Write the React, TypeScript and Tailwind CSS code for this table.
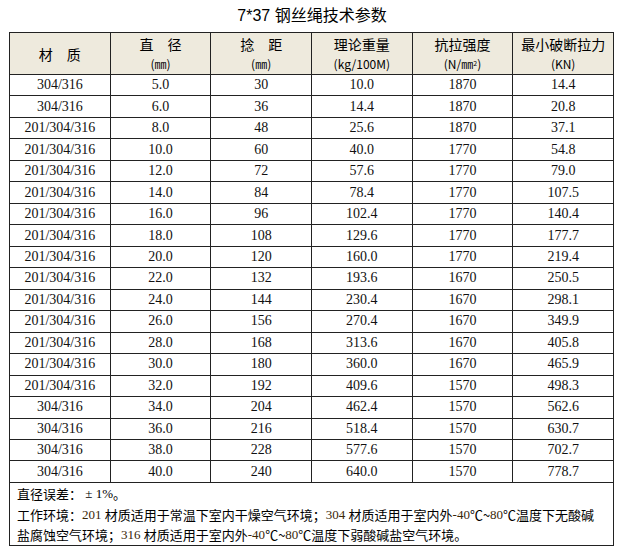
const rows: [string, string, string, string, string, string][] = [
  ['304/316', '5.0', '30', '10.0', '1870', '14.4'],
  ['304/316', '6.0', '36', '14.4', '1870', '20.8'],
  ['201/304/316', '8.0', '48', '25.6', '1870', '37.1'],
  ['201/304/316', '10.0', '60', '40.0', '1770', '54.8'],
  ['201/304/316', '12.0', '72', '57.6', '1770', '79.0'],
  ['201/304/316', '14.0', '84', '78.4', '1770', '107.5'],
  ['201/304/316', '16.0', '96', '102.4', '1770', '140.4'],
  ['201/304/316', '18.0', '108', '129.6', '1770', '177.7'],
  ['201/304/316', '20.0', '120', '160.0', '1770', '219.4'],
  ['201/304/316', '22.0', '132', '193.6', '1670', '250.5'],
  ['201/304/316', '24.0', '144', '230.4', '1670', '298.1'],
  ['201/304/316', '26.0', '156', '270.4', '1670', '349.9'],
  ['201/304/316', '28.0', '168', '313.6', '1670', '405.8'],
  ['201/304/316', '30.0', '180', '360.0', '1670', '465.9'],
  ['201/304/316', '32.0', '192', '409.6', '1570', '498.3'],
  ['304/316', '34.0', '204', '462.4', '1570', '562.6'],
  ['304/316', '36.0', '216', '518.4', '1570', '630.7'],
  ['304/316', '38.0', '228', '577.6', '1570', '702.7'],
  ['304/316', '40.0', '240', '640.0', '1570', '778.7'],
];

function Num({ children }: { children: React.ReactNode }) {
  return <span className="font-['Liberation_Serif',serif] text-[#3a2608]">{children}</span>;
}

function HeadCell({ top, sub }: { top: string; sub?: React.ReactNode }) {
  return (
    <div className="flex h-[42px] flex-col items-center justify-center overflow-hidden border-r border-b border-[#222] bg-[#eeeadd] font-['Noto_Sans_CJK_SC',sans-serif] text-black">
      <div className="h-[20px] text-[14px] leading-[20px]">{top}</div>
      {sub && <div className="h-[19px] text-[12px] leading-[19px]">{sub}</div>}
    </div>
  );
}

export default function App() {
  return (
    <div className="h-[556px] w-[624px] bg-white pt-[5px]">
      <h1 className="h-[22px] text-center font-['Liberation_Sans','Noto_Sans_CJK_SC',sans-serif] text-[16px] leading-[22px] text-black">
        7*37 钢丝绳技术参数
      </h1>
      <div className="ml-[9px] mt-[5px] w-[605px] border-t border-l border-[#222]">
        <div className="grid grid-cols-6">
          <HeadCell top="材　质" />
          <HeadCell top="直　径" sub="(㎜)" />
          <HeadCell top="捻　距" sub="(㎜)" />
          <HeadCell top="理论重量" sub="(kg/100M)" />
          <HeadCell top="抗拉强度" sub={<>(N/㎜<sup className="text-[7px]">2</sup>)</>} />
          <HeadCell top="最小破断拉力" sub="(KN)" />
          {rows.map((r, i) =>
            r.map((c, j) => (
              <div
                key={`${i}-${j}`}
                className="flex h-[21.47px] items-center justify-center border-r border-b border-[#222] font-['Liberation_Serif',serif] text-[14px] leading-[20px] text-[#111]"
              >
                {c}
              </div>
            ))
          )}
        </div>
        <div className="h-[63px] border-r border-b border-[#222] pl-[7px] font-['Noto_Sans_CJK_SC',sans-serif] text-[13px] leading-[21px] text-black">
          <div className="flex h-[21px] items-center whitespace-nowrap">
            直径误差：<span className="font-['Liberation_Serif',serif]">&nbsp;± 1%</span>。
          </div>
          <div className="flex h-[21px] items-center whitespace-pre">
            工作环境：<Num>201 </Num>材质适用于常温下室内干燥空气环境；<Num>304 </Num>材质适用于室内外<Num>-40</Num>℃~<Num>80</Num>℃温度下无酸碱
          </div>
          <div className="flex h-[20px] items-center whitespace-pre">
            盐腐蚀空气环境；<Num>316 </Num>材质适用于室内外<Num>-40</Num>℃~<Num>80</Num>℃温度下弱酸碱盐空气环境。
          </div>
        </div>
      </div>
    </div>
  );
}
